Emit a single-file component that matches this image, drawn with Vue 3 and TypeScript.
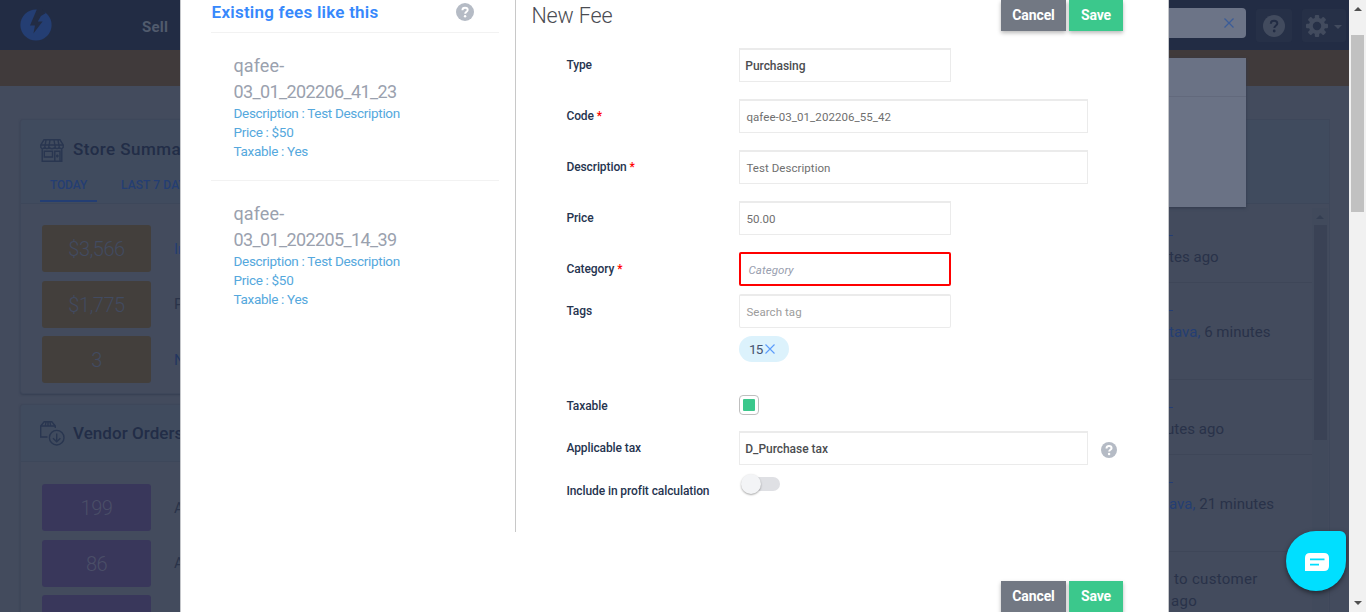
<script setup lang="ts">
interface Tile { value: string; label: string; tone: string }
interface Fee { code: string; details: string[] }
interface Activity { link: string; text: string; indent: number; tone: string }

const sales: Tile[] = [
  { value: '$3,566', label: 'In', tone: 'blue' },
  { value: '$1,775', label: 'P', tone: 'dark' },
  { value: '3', label: 'N', tone: 'navy' },
]
const orders: Tile[] = [
  { value: '199', label: 'A', tone: 'dark' },
  { value: '86', label: 'A', tone: 'dark' },
  { value: '', label: '', tone: 'dark' },
]
const fees: Fee[] = [
  { code: '03_01_202206_41_23', details: ['Description : Test Description', 'Price : $50', 'Taxable : Yes'] },
  { code: '03_01_202205_14_39', details: ['Description : Test Description', 'Price : $50', 'Taxable : Yes'] },
]
const activity: Activity[] = [
  { link: '', text: 'tes ago', indent: 0, tone: 'a1' },
  { link: 'tava,', text: ' 6 minutes', indent: 0, tone: 'a2' },
  { link: '', text: 'utes ago', indent: -3, tone: 'a3' },
  { link: 'ava,', text: ' 21 minutes', indent: 0, tone: 'a4' },
]
</script>

<template>
  <div class="page">
    <div class="screen">
      <header class="topbar">
        <svg class="logo" width="32" height="32" viewBox="0 0 32 32">
          <circle cx="16" cy="16" r="15.6" fill="#243e73" />
          <path d="M17 0 L10 16.6 H15 L13.4 24.5 L22.6 12.4 H17.8 L23.5 2.6 L20.5 7.3 L25.6 4.2 L22 0 Z" fill="#222c44" />
        </svg>
        <span class="nav">Sell</span>
        <div class="search"><svg width="10" height="10" viewBox="0 0 10 10"><path d="M.5.5 9.5 9.5M9.5.5.5 9.5" stroke="#3b5c98" stroke-width="1.3" /></svg></div>
        <div class="tool help">
          <svg width="22" height="22" viewBox="0 0 22 22"><circle cx="11" cy="11" r="11" fill="#424b5e" /><path d="M7.8 8.7C7.8 6.8 9.1 5.7 11 5.7s3.3 1.1 3.3 2.7c0 2-3 2.1-3 4.6" fill="none" stroke="#222c44" stroke-width="2" /><circle cx="11.2" cy="16" r="1.4" fill="#222c44" /></svg>
        </div>
        <div class="tool gear">
          <svg width="22" height="22" viewBox="0 0 22 22"><g fill="#424b5e"><rect v-for="n in 4" :key="n" x="8.8" y="0" width="4.4" height="22" rx="1" :transform="`rotate(${n * 45} 11 11)`" /><circle cx="11" cy="11" r="8.2" /></g><circle cx="11" cy="11" r="4.2" fill="#263047" /></svg>
          <i class="caret"></i>
        </div>
      </header>
      <div class="strip"></div>
      <div class="board">
        <div class="side">
          <section class="card store">
            <div class="head">
              <div class="heading">
                <svg width="24" height="23" viewBox="0 0 24 23" fill="none" stroke="#293650" stroke-width="1.4"><path d="M4 .8H20L23.2 6V8.3Q21.2 11 19.3 8.3Q17 11 15.2 8.3Q12 11 8.8 8.3Q7 11 4.8 8.3Q2.5 11 .8 8.3V6ZM.8 6H23.2M6 1 4.8 8M10 1 8.8 8M14 1 15.2 8M18 1 19.3 8M2.2 10.2V22.2H21.8V10.2M4.3 12.3H12.5V18H4.3ZM14.8 22V12.3H20V22M17.3 15.5V18.5M16 17H18.7" /></svg>
                <h2>Store Summa</h2>
              </div>
              <nav class="tabs"><span class="on">TODAY</span><span>LAST 7 DAYS</span></nav>
            </div>
            <div class="tiles">
              <div v-for="t in sales" :key="t.value" class="line"><b class="tile amber">{{ t.value }}</b><span :class="t.tone">{{ t.label }}</span></div>
            </div>
          </section>
          <section class="card vendor">
            <div class="head">
              <div class="heading">
                <svg width="25" height="25" viewBox="0 0 25 25" fill="none" stroke="#293650" stroke-width="1.4"><path d="M7.5 16H.7V5L4.2.8H11.8L15.3 5V7M.7 5H15.3M5.3 5 6 1M10.7 5 10 1M8 1V5" /><circle cx="16.7" cy="16.7" r="7.3" /><path d="M16.7 12.5V20.5M13 17.3 16.7 20.8 20.4 17.3" /></svg>
                <h2>Vendor Orders</h2>
              </div>
            </div>
            <div class="tiles">
              <div v-for="(t, i) in orders" :key="i" class="line"><b class="tile violet">{{ t.value }}</b><span :class="t.tone">{{ t.label }}</span></div>
            </div>
          </section>
        </div>
        <section class="feed">
          <div class="feedhead"></div>
          <div class="feedbody">
            <div class="rows">
              <div v-for="a in activity" :key="a.tone" class="row" :class="a.tone">
                <i class="dash"></i>
                <p :style="{ marginLeft: a.indent + 'px' }"><em>{{ a.link }}</em>{{ a.text }}</p>
              </div>
              <div class="row last"><p class="c1">to customer</p><p class="c2">ago</p></div>
            </div>
            <div class="track"><i></i><b></b></div>
          </div>
        </section>
      </div>
      <div class="dropdown"></div>
    </div>

    <main class="modal">
      <aside class="existing">
        <div class="exhead">
          <h3>Existing fees like this</h3>
          <svg width="18" height="18" viewBox="0 0 18 18"><circle cx="9" cy="9" r="9" fill="#b5bbc5" /><path d="M6.4 7.2C6.4 5.6 7.5 4.7 9 4.7s2.7.9 2.7 2.3c0 1.7-2.5 1.8-2.5 3.7" fill="none" stroke="#fff" stroke-width="1.9" /><circle cx="9.1" cy="13.2" r="1.2" fill="#fff" /></svg>
        </div>
        <article v-for="(f, i) in fees" :key="i" class="fee">
          <p class="name">qafee-</p>
          <p class="name code">{{ f.code }}</p>
          <p v-for="d in f.details" :key="d" class="detail">{{ d }}</p>
        </article>
      </aside>
      <div class="content">
        <div class="title">
          <h1>New Fee</h1>
          <div class="buttons"><button class="cancel">Cancel</button><button class="save">Save</button></div>
        </div>
        <form class="form">
          <div class="field"><label>Type</label><div class="box short bold"><span>Purchasing</span></div></div>
          <div class="field"><label>Code <i>*</i></label><div class="box"><span>qafee-03_01_202206_55_42</span></div></div>
          <div class="field"><label>Description <i>*</i></label><div class="box"><span>Test Description</span></div></div>
          <div class="field"><label>Price</label><div class="box short"><span>50.00</span></div></div>
          <div class="field tight"><label>Category <i>*</i></label><div class="box short error"><span>Category</span></div></div>
          <div class="field tight"><label>Tags</label><div class="box short round faint"><span>Search tag</span></div></div>
          <div class="field chiprow"><label></label><div class="chip"><span>15</span><svg width="10" height="10" viewBox="0 0 10 10"><path d="M.5.5 9.5 9.5M9.5.5.5 9.5" stroke="#5b9cfb" stroke-width="1.1" /></svg></div></div>
          <div class="field checkrow"><label class="low">Taxable</label><div class="check"><i></i></div></div>
          <div class="field tight"><label>Applicable tax</label><div class="box bold"><span>D_Purchase tax</span></div>
            <svg class="hint" width="16" height="16" viewBox="0 0 18 18"><circle cx="9" cy="9" r="9" fill="#b5bbc5" /><path d="M6.2 7.2C6.2 5.4 7.4 4.5 9 4.5s2.9.9 2.9 2.4c0 1.8-2.7 1.9-2.7 3.8" fill="none" stroke="#fff" stroke-width="2.2" /><circle cx="9.1" cy="13.4" r="1.4" fill="#fff" /></svg>
          </div>
          <div class="field"><label class="low">Include in profit calculation</label><div class="toggle"><i></i></div></div>
        </form>
        <div class="buttons foot"><button class="cancel">Cancel</button><button class="save">Save</button></div>
      </div>
    </main>

    <div class="chat">
      <svg width="24" height="18" viewBox="0 0 24 18"><path d="M5 0H19Q24 0 24 5V13Q24 18 19 18H0V5Q0 0 5 0Z" fill="#fff" /><path d="M5 6.3H19.5M5 11.7H14" stroke="#00dfff" stroke-width="1.7" /></svg>
    </div>
    <div class="scrollbar"><i class="up"></i><b></b><i class="down"></i></div>
  </div>
</template>

<style>
html, body { margin: 0; overflow: hidden; }
</style>

<style scoped>
* { box-sizing: border-box; }
h1, h2, h3, p { margin: 0; }
i, em { font-style: normal; }
svg { display: block; overflow: visible; flex: none; }
.page { position: relative; width: 1366px; height: 612px; overflow: hidden; font-family: Roboto, "Liberation Sans", sans-serif; background: #434b5d; white-space: nowrap; }
.screen { position: relative; width: 1349px; height: 612px; overflow: hidden; }
.topbar { height: 50px; background: #222c44; display: flex; align-items: flex-start; }
.logo { margin: 9px 0 0 20px; overflow: hidden; }
.nav { margin: 18px 0 0 90px; width: 30px; font-size: 15px; line-height: 18px; font-weight: 700; color: #515b6d; letter-spacing: .2px; }
.search { margin: 8px 10px 0 978px; width: 96px; height: 30px; background: #6c7487; border-radius: 4px; display: flex; align-items: center; justify-content: flex-end; padding-right: 12px; }
.tool { height: 33px; margin-top: 9px; background: #263047; border-radius: 3px; display: flex; align-items: center; }
.help { width: 36px; padding-left: 7px; margin-right: 10px; }
.gear { width: 44px; padding-left: 4px; }
.caret { border: 4px solid transparent; border-top-color: #424b5e; border-bottom: 0; margin: 3px 0 0 6px; }
.strip { height: 36px; background: #403a3b; }
.board { display: flex; height: 526px; padding: 33px 19px 0 20px; }
.side { width: 170px; flex: none; }
.card { border: 1px solid #3e475a; border-radius: 3px; background: #434b5d; box-shadow: 0 1px 2px #363f52; overflow: hidden; }
.head { background: #404b5e; border-bottom: 1px solid #3d475a; }
.store { height: 275px; }
.store .head { height: 84px; padding-top: 18px; }
.heading { display: flex; align-items: center; padding-left: 19px; height: 24px; }
.heading h2 { margin: -2px 0 0 9px; font-size: 17px; font-weight: 500; color: #222d47; letter-spacing: .45px; }
.tabs { display: flex; padding-left: 19px; margin-top: 3px; font-size: 12px; font-weight: 500; color: #243e73; height: 37px; line-height: 40px; letter-spacing: .1px; }
.tabs .on { width: 57px; flex: none; text-align: center; border-bottom: 2px solid #243e73; margin-right: 24px; letter-spacing: -.1px; }
.tiles { padding: 21px 0 0 21px; display: grid; gap: 8.5px; }
.line { display: flex; height: 47px; align-items: center; font-size: 15px; }
.line span { margin-left: 23px; }
.tile { width: 109px; height: 47px; line-height: 49px; border-radius: 3px; text-align: center; font-size: 20px; font-weight: 300; color: #424b61; letter-spacing: -.5px; flex: none; }
.amber { background: #433f3c; }
.violet { background: #39375b; color: #4b4f68; }
.blue { color: #243e73; }
.dark { color: #2a3349; }
.navy { color: #233660; }
.vendor { margin-top: 10px; height: 260px; }
.vendor .head { height: 57px; padding-top: 16px; }
.vendor .heading h2 { margin: 0 0 0 8px; letter-spacing: .05px; }
.vendor .tiles { padding-top: 22px; }
.feed { margin-left: 970px; width: 170px; flex: none; border: 1px solid #3e475a; border-left: 0; height: 520px; }
.feedhead { height: 84px; background: #404b5e; border-bottom: 1px solid #3d475a; }
.feedbody { display: flex; padding-top: 4px; }
.rows { width: 152px; flex: none; padding-left: 8px; font-size: 15px; font-weight: 400; letter-spacing: .03px; color: #293249; }
.row { height: 97px; border-bottom: 1px solid #3e4658; margin-left: 1px; padding-top: 27px; }
.row em { color: #243e73; }
.dash { display: block; height: 1px; width: 4px; background: #243e73; }
.row p { line-height: 20px; margin-top: 11px; }
.a1 { height: 75px; }
.a3 { height: 75px; }
.last { border: 0; padding: 16px 0 0 5px; letter-spacing: .3px; }
.row.last p { margin: 0; line-height: 22px; }
.row.last .c2 { margin-left: -3px; }
.track { width: 16px; height: 405px; padding-top: 7px; background: #414a5c; }
.track i { display: block; margin-left: 4px; border: 4px solid transparent; border-top: 0; border-bottom-color: #343e52; width: 0; }
.track b { display: block; margin: 6px 0 0 2px; width: 13px; height: 215px; background: #3a4255; }
.dropdown { position: absolute; left: 1100px; top: 58px; width: 146px; height: 149px; background: linear-gradient(#62697c, #62697c) 0 38px / 100% 1px no-repeat #6a7285; box-shadow: 0 1px 3px #30394c; }
.modal { position: absolute; left: 180px; top: 0; width: 989px; height: 612px; background: #fff; border: 1px solid #c5c7cb; border-width: 0 1px; display: flex; color: #24324f; overflow: hidden; }
.existing { width: 335px; height: 532px; border-right: 1px solid #c8c8c8; padding-left: 30px; flex: none; }
.exhead { width: 288px; height: 33px; border-bottom: 1px solid #f2f2f2; display: flex; justify-content: space-between; padding: 3px 25px 0 .6px; }
.exhead h3 { font-size: 17px; line-height: 20px; font-weight: 600; color: #3688fc; margin-top: -1px; letter-spacing: .24px; }
.fee { width: 288px; height: 148px; padding: 20px 0 0 22.5px; border-bottom: 1px solid #f2f2f2; }
.fee + .fee { border: 0; }
.name { font-size: 18px; line-height: 26px; color: #9aa1ae; font-weight: 400; letter-spacing: .1px; }
.code { letter-spacing: -.62px; margin-bottom: -.8px; }
.detail { font-size: 13.5px; line-height: 18.7px; color: #55a8dd; letter-spacing: -.31px; }
.content { flex: 1; position: relative; }
.title { height: 31px; display: flex; justify-content: space-between; padding-left: 15.5px; padding-right: 45px; }
h1 { font-size: 21.5px; line-height: 32px; font-weight: 300; color: #4a4c52; letter-spacing: -.15px; }
.buttons { display: flex; gap: 3px; }
button { border: 0; height: 31px; font: 700 14px/29px Roboto, sans-serif; color: #fff; padding: 0; letter-spacing: -.1px; box-shadow: 0 2px 4px rgba(0,0,0,.28); }
.cancel { width: 65px; background: #727883; }
.save { width: 54px; background: #3bc88c; }
.foot { position: absolute; right: 45px; top: 581px; }
.foot button { height: 34px; padding-bottom: 3px; }
.form { padding: 17px 0 0 50px; }
.field { display: flex; height: 34px; align-items: center; margin-bottom: 17px; }
.tight { margin-bottom: 8px; }
label { width: 173px; padding-left: .4px; font-size: 12px; font-weight: 500; color: #26344f; flex: none; letter-spacing: -.09px; }
label i { color: #f00; }
.low { padding-top: 2px; }
.box { width: 349px; height: 34px; border: 1px solid #ebebeb; border-top-width: 2px; padding: 1px 0 0 6.4px; display: flex; align-items: center; font-size: 11.5px; color: #6f6f6f; letter-spacing: .06px; }
.short { width: 212px; }
.bold { font-size: 12px; font-weight: 500; color: #4b4d50; padding-left: 5.3px; letter-spacing: -.04px; }
.round { border-radius: 2px; }
.faint { color: #9c9c9c; }
.error { border: 2px solid #f00; border-radius: 2px; font-style: italic; color: #989eae; padding-left: 7.5px; }
.chiprow { height: 26px; margin-bottom: 33px; }
.chip { width: 50px; height: 26px; border-radius: 13px; background: #dcf2fc; display: flex; align-items: center; font-size: 13.5px; padding-left: 10px; color: #45536e; letter-spacing: -.9px; }
.chip svg { margin-left: 3px; }
.checkrow { height: 20px; margin-bottom: 16px; }
.check { width: 20px; height: 20px; border: 1px solid #bfbfbf; border-radius: 4px; padding: 3px; }
.check i { display: block; width: 12px; height: 12px; background: #3bc88c; border-radius: 1px; }
.hint { margin: 3px 0 0 13px; }
.toggle { margin: -12px 0 0 3px; width: 38px; height: 14px; border-radius: 7px; background: #dfe0e4; }
.toggle i { display: block; width: 20px; height: 20px; margin: -3px 0 0 -1px; border-radius: 50%; background: #f3f4f6; box-shadow: 0 1px 2px rgba(0,0,0,.35); }
.chat { position: absolute; left: 1286px; top: 531px; width: 60px; height: 60px; border-radius: 30px 6px 30px 30px; background: #00dfff; box-shadow: 0 2px 5px rgba(0,0,0,.5); display: flex; align-items: center; padding: 2px 0 0 19px; }
.scrollbar { position: absolute; right: 0; top: 0; width: 17px; height: 612px; background: #f1f1f1; display: flex; flex-direction: column; align-items: center; }
.scrollbar b { width: 13px; height: 177px; background: #c1c1c1; margin-top: 24px; }
.scrollbar i { border: 4px solid transparent; }
.scrollbar .up { border-top: 0; border-bottom-color: #505050; margin-top: 7px; }
.scrollbar .down { border-bottom: 0; border-top-color: #505050; margin-top: 389px; }
</style>
